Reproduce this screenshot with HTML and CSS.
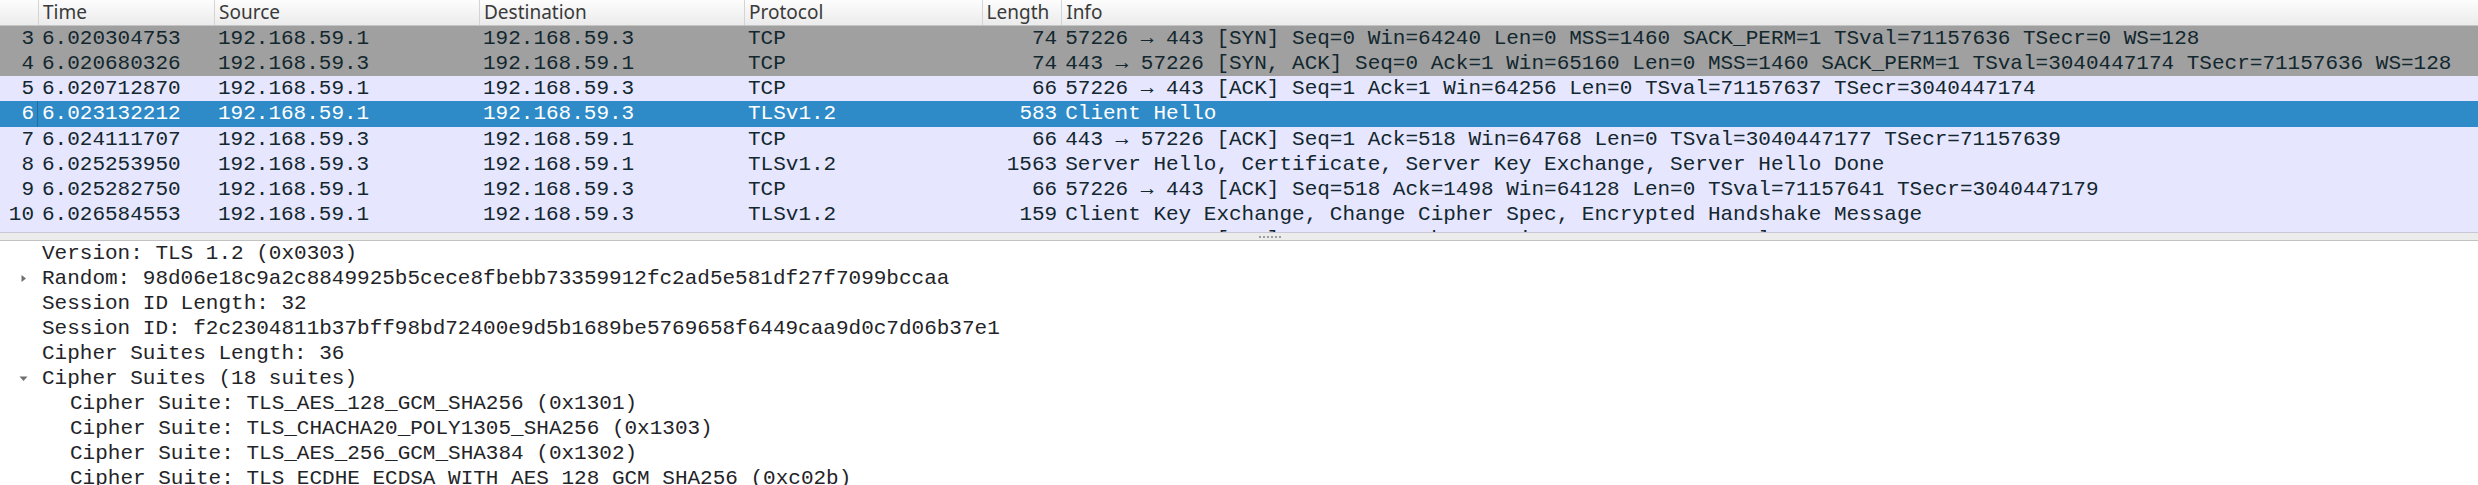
FILE: index.html
```html
<!DOCTYPE html>
<html>
<head>
<meta charset="utf-8">
<title>Wireshark</title>
<link rel="stylesheet" href="styles.css">
</head>
<body>
<div class="app">
  <section class="plist">
    <div class="hdr">
      <div class="hc"></div>
      <div class="hc">Time</div>
      <div class="hc">Source</div>
      <div class="hc">Destination</div>
      <div class="hc">Protocol</div>
      <div class="hc">Length</div>
      <div class="hc">Info</div>
    </div>
    <div class="row syn"><span class="c num">3</span><span class="c">6.020304753</span><span class="c">192.168.59.1</span><span class="c">192.168.59.3</span><span class="c">TCP</span><span class="c len">74</span><span class="c">57226 → 443 [SYN] Seq=0 Win=64240 Len=0 MSS=1460 SACK_PERM=1 TSval=71157636 TSecr=0 WS=128</span></div>
    <div class="row syn"><span class="c num">4</span><span class="c">6.020680326</span><span class="c">192.168.59.3</span><span class="c">192.168.59.1</span><span class="c">TCP</span><span class="c len">74</span><span class="c">443 → 57226 [SYN, ACK] Seq=0 Ack=1 Win=65160 Len=0 MSS=1460 SACK_PERM=1 TSval=3040447174 TSecr=71157636 WS=128</span></div>
    <div class="row tcp"><span class="c num">5</span><span class="c">6.020712870</span><span class="c">192.168.59.1</span><span class="c">192.168.59.3</span><span class="c">TCP</span><span class="c len">66</span><span class="c">57226 → 443 [ACK] Seq=1 Ack=1 Win=64256 Len=0 TSval=71157637 TSecr=3040447174</span></div>
    <div class="row sel"><span class="c num">6</span><span class="c">6.023132212</span><span class="c">192.168.59.1</span><span class="c">192.168.59.3</span><span class="c">TLSv1.2</span><span class="c len">583</span><span class="c">Client Hello</span></div>
    <div class="row tcp"><span class="c num">7</span><span class="c">6.024111707</span><span class="c">192.168.59.3</span><span class="c">192.168.59.1</span><span class="c">TCP</span><span class="c len">66</span><span class="c">443 → 57226 [ACK] Seq=1 Ack=518 Win=64768 Len=0 TSval=3040447177 TSecr=71157639</span></div>
    <div class="row tcp"><span class="c num">8</span><span class="c">6.025253950</span><span class="c">192.168.59.3</span><span class="c">192.168.59.1</span><span class="c">TLSv1.2</span><span class="c len">1563</span><span class="c">Server Hello, Certificate, Server Key Exchange, Server Hello Done</span></div>
    <div class="row tcp"><span class="c num">9</span><span class="c">6.025282750</span><span class="c">192.168.59.1</span><span class="c">192.168.59.3</span><span class="c">TCP</span><span class="c len">66</span><span class="c">57226 → 443 [ACK] Seq=518 Ack=1498 Win=64128 Len=0 TSval=71157641 TSecr=3040447179</span></div>
    <div class="row tcp"><span class="c num">10</span><span class="c">6.026584553</span><span class="c">192.168.59.1</span><span class="c">192.168.59.3</span><span class="c">TLSv1.2</span><span class="c len">159</span><span class="c">Client Key Exchange, Change Cipher Spec, Encrypted Handshake Message</span></div>
    <div class="row tcp"><span class="c num">11</span><span class="c">6.027311648</span><span class="c">192.168.59.3</span><span class="c">192.168.59.1</span><span class="c">TCP</span><span class="c len">66</span><span class="c">443 → 57226 [ACK] Seq=1498 Ack=611 Win=64640 Len=0 TSval=3040447181 TSecr=71157642</span></div>
  </section>
  <div class="splitter"><span class="grip"></span></div>
  <section class="tree">
    <div class="ti"><span class="tw"></span><span class="tt">Version: TLS 1.2 (0x0303)</span></div>
    <div class="ti"><span class="tw"><svg class="arr" width="9" height="9" viewBox="0 0 9 9"><path d="M2.5 1 L7 4.5 L2.5 8 Z"/></svg></span><span class="tt">Random: 98d06e18c9a2c8849925b5cece8fbebb73359912fc2ad5e581df27f7099bccaa</span></div>
    <div class="ti"><span class="tw"></span><span class="tt">Session ID Length: 32</span></div>
    <div class="ti"><span class="tw"></span><span class="tt">Session ID: f2c2304811b37bff98bd72400e9d5b1689be5769658f6449caa9d0c7d06b37e1</span></div>
    <div class="ti"><span class="tw"></span><span class="tt">Cipher Suites Length: 36</span></div>
    <div class="ti"><span class="tw"><svg class="arr" width="9" height="9" viewBox="0 0 9 9"><path d="M0.5 2.5 L8.5 2.5 L4.5 7 Z"/></svg></span><span class="tt">Cipher Suites (18 suites)</span></div>
    <div class="ti l1"><span class="tw"></span><span class="tt">Cipher Suite: TLS_AES_128_GCM_SHA256 (0x1301)</span></div>
    <div class="ti l1"><span class="tw"></span><span class="tt">Cipher Suite: TLS_CHACHA20_POLY1305_SHA256 (0x1303)</span></div>
    <div class="ti l1"><span class="tw"></span><span class="tt">Cipher Suite: TLS_AES_256_GCM_SHA384 (0x1302)</span></div>
    <div class="ti l1"><span class="tw"></span><span class="tt">Cipher Suite: TLS_ECDHE_ECDSA_WITH_AES_128_GCM_SHA256 (0xc02b)</span></div>
    <div class="ti l1"><span class="tw"></span><span class="tt">Cipher Suite: TLS_ECDHE_RSA_WITH_AES_128_GCM_SHA256 (0xc02f)</span></div>
  </section>
</div>
</body>
</html>
```

FILE: styles.css
```css
html, body {
  margin: 0;
  padding: 0;
  background: #ffffff;
}

body {
  width: 2478px;
  height: 485px;
  overflow: hidden;
}

.app {
  display: flex;
  flex-direction: column;
  width: 2478px;
  height: 485px;
  overflow: hidden;
}

/* ---------- packet list ---------- */
.plist {
  height: 232px;
  flex: none;
  overflow: hidden;
  background: #e7e6ff;
  border-bottom: 1px solid #c9c8d6;
}

.hdr,
.row {
  display: grid;
  grid-template-columns: 38px 176px 265px 265px 237.6px 79.6px 1fr;
}

.hdr {
  height: 25px;
  border-bottom: 1px solid #c4c4c4;
  background: linear-gradient(#fdfdfd, #ebebeb);
  font-family: "Noto Sans", "Liberation Sans", sans-serif;
  font-size: 19px;
  color: #3a3a3a;
}

.hc {
  line-height: 25px;
  padding-left: 4px;
  border-left: 1px solid #d4d4d4;
  white-space: nowrap;
  overflow: hidden;
}

.hc:first-child {
  border-left: none;
}

.row {
  height: 25.15px;
  font-family: "Liberation Mono", "DejaVu Sans Mono", monospace;
  font-size: 21px;
  line-height: 25.15px;
  color: #12272e;
  white-space: nowrap;
}

.c {
  padding-left: 4px;
  overflow: hidden;
}

.c.num,
.c.len {
  text-align: right;
  padding-left: 0;
  padding-right: 4px;
}

.row.syn {
  background: #a0a0a0;
}

.row.tcp {
  background: #e7e6ff;
}

.row.sel {
  background: #2f8bc8;
  color: #ffffff;
}

.row.sel .num {
  box-shadow: inset -1px 0 0 rgba(20, 70, 110, 0.45);
}

/* ---------- splitter ---------- */
.splitter {
  height: 7px;
  flex: none;
  background: #ececec;
  border-bottom: 1px solid #c3c3c3;
  display: flex;
  justify-content: center;
  align-items: center;
}

.grip {
  width: 24px;
  height: 2px;
  margin-left: 62px;
  background-image: radial-gradient(circle, #9c9c9c 0.9px, transparent 1.1px);
  background-size: 4px 2px;
}

/* ---------- packet details ---------- */
.tree {
  flex: 1;
  overflow: hidden;
  background: #ffffff;
  font-family: "Liberation Mono", "DejaVu Sans Mono", monospace;
  font-size: 21px;
  color: #1f2428;
}

.ti {
  display: flex;
  align-items: center;
  height: 25px;
  padding-left: 14px;
  white-space: nowrap;
}

.ti.l1 {
  padding-left: 42px;
}

.tw {
  width: 28px;
  flex: none;
  display: flex;
  align-items: center;
  padding-left: 5px;
  box-sizing: border-box;
}

.arr {
  fill: #707070;
}

.tt {
  line-height: 25px;
}
```
